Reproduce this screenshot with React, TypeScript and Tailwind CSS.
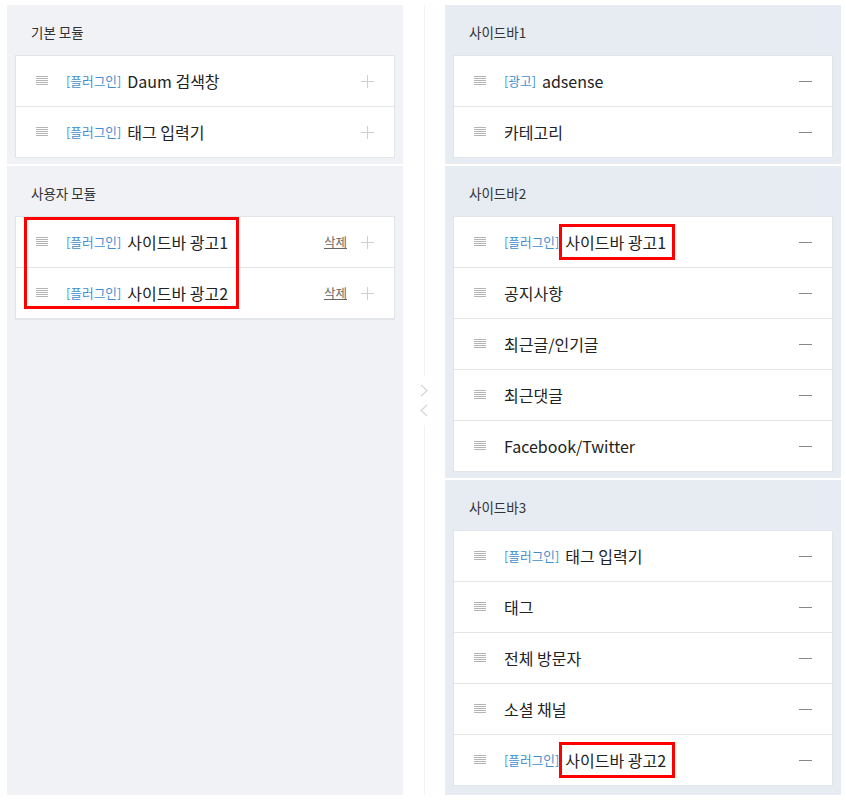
import React from "react";

type Item = { label?: string; text: string; mark?: boolean };

const basic: Item[] = [
  { label: "[플러그인]", text: "Daum 검색창" },
  { label: "[플러그인]", text: "태그 입력기" },
];

const user: Item[] = [
  { label: "[플러그인]", text: "사이드바 광고1" },
  { label: "[플러그인]", text: "사이드바 광고2" },
];

const sidebars: { title: string; items: Item[] }[] = [
  {
    title: "사이드바1",
    items: [{ label: "[광고]", text: "adsense" }, { text: "카테고리" }],
  },
  {
    title: "사이드바2",
    items: [
      { label: "[플러그인]", text: "사이드바 광고1", mark: true },
      { text: "공지사항" },
      { text: "최근글/인기글" },
      { text: "최근댓글" },
      { text: "Facebook/Twitter" },
    ],
  },
  {
    title: "사이드바3",
    items: [
      { label: "[플러그인]", text: "태그 입력기" },
      { text: "태그" },
      { text: "전체 방문자" },
      { text: "소셜 채널" },
      { label: "[플러그인]", text: "사이드바 광고2", mark: true },
    ],
  },
];

const font = {
  fontFamily: '"Noto Sans CJK KR", "Noto Sans", sans-serif',
};

function DragIcon() {
  return (
    <svg width="12" height="10" viewBox="0 0 12 10" className="shrink-0">
      {[0.5, 2.5, 4.5, 6.5, 8.5].map((y) => (
        <line key={y} x1="0" x2="12" y1={y} y2={y} stroke="#b4b4b4" strokeWidth="1" />
      ))}
    </svg>
  );
}

function PlusIcon() {
  return (
    <svg width="13" height="13" viewBox="0 0 13 13" className="shrink-0">
      <line x1="6.5" y1="0" x2="6.5" y2="13" stroke="#cfcfcf" strokeWidth="1" />
      <line x1="0" y1="6.5" x2="13" y2="6.5" stroke="#cfcfcf" strokeWidth="1" />
    </svg>
  );
}

function MinusIcon() {
  return (
    <svg width="13" height="13" viewBox="0 0 13 13" className="shrink-0">
      <line x1="0" y1="6.5" x2="13" y2="6.5" stroke="#888" strokeWidth="1" />
    </svg>
  );
}

function Row({ item, kind, del }: { item: Item; kind: "add" | "remove"; del?: boolean }) {
  return (
    <div className="flex h-[51px] items-center border-b border-[#e3e5e9] pl-[20px] pr-[20px] last:h-[50px] last:border-b-0">
      <DragIcon />
      <div className="ml-[18px] flex flex-1 items-center">
        {item.label && (
          <span className="mr-[6px] text-[12.7px] text-[#3f8fcf]">{item.label}</span>
        )}
        <span className="relative text-[16px] text-[#222]">
          {item.text}
          {item.mark && (
            <span className="absolute left-[-6px] top-1/2 h-[36px] w-[116px] -translate-y-1/2 border-[3px] border-[#ff0000]" />
          )}
        </span>
      </div>
      {del && <span className="mr-[14px] text-[12.5px] text-[#666] underline">삭제</span>}
      {kind === "add" ? <PlusIcon /> : <MinusIcon />}
    </div>
  );
}

function Section({
  title,
  items,
  kind,
  del,
  bg,
  grow,
  box,
}: {
  title: string;
  items: Item[];
  kind: "add" | "remove";
  del?: boolean;
  bg: string;
  grow?: boolean;
  box?: boolean;
}) {
  return (
    <div className={`${bg} px-[8px] pb-[6px] ${grow ? "flex-1" : ""}`}>
      <div className="pl-[16px] pt-[18px] pb-[13px] text-[13.5px] leading-[19px] text-[#333]">
        {title}
      </div>
      <div className="relative border border-[#e1e4e8] bg-white">
        {items.map((it) => (
          <Row key={it.text} item={it} kind={kind} del={del} />
        ))}
        {box && (
          <div className="absolute left-[8px] top-0 h-[92px] w-[215px] border-[3px] border-[#ff0000]" />
        )}
      </div>
    </div>
  );
}

function Chevron({ dir }: { dir: "left" | "right" }) {
  return (
    <svg width="8" height="13" viewBox="0 0 8 13">
      <polyline
        points={dir === "right" ? "1,1 7,6.5 1,12" : "7,1 1,6.5 7,12"}
        fill="none"
        stroke="#d6d6d6"
        strokeWidth="1.2"
      />
    </svg>
  );
}

export default function App() {
  return (
    <div className="flex h-[801px] w-[846px] bg-white pl-[7px] pt-[5px] pb-[6px]" style={font}>
      <div className="flex w-[396px] flex-col gap-[2px]">
        <Section title="기본 모듈" items={basic} kind="add" bg="bg-[#f1f2f6]" />
        <Section title="사용자 모듈" items={user} kind="add" del bg="bg-[#f1f2f6]" grow box />
      </div>

      <div className="flex w-[42px] flex-col items-center">
        <div className="flex-1 border-l border-[#f2f2f2]" />
        <div className="flex flex-col items-center gap-[7px] py-[8px]">
          <Chevron dir="right" />
          <Chevron dir="left" />
        </div>
        <div className="flex-1 border-l border-[#f2f2f2]" />
      </div>

      <div className="flex w-[396px] flex-col gap-[2px]">
        {sidebars.map((s, i) => (
          <Section
            key={s.title}
            title={s.title}
            items={s.items}
            kind="remove"
            bg="bg-[#e6ecf2]"
            grow={i === sidebars.length - 1}
          />
        ))}
      </div>
    </div>
  );
}
